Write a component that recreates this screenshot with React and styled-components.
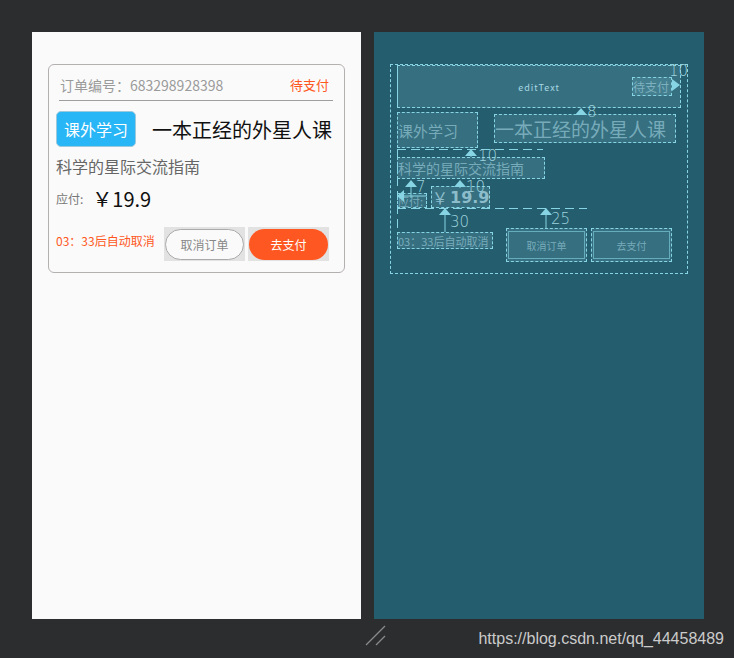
import React from 'react'
import styled, { createGlobalStyle } from 'styled-components'

const GlobalStyle = createGlobalStyle`
  html, body {
    margin: 0;
    padding: 0;
    background: #2c2d2f;
  }
  body {
    font-family: "Noto Sans CJK SC", "Noto Sans", sans-serif;
  }
`

const Page = styled.div`
  position: relative;
  width: 734px;
  height: 658px;
  background: #2c2d2f;
  overflow: hidden;
`

const Panels = styled.div`
  display: flex;
  gap: 13px;
  padding: 32px 0 0 32px;
`

/* ---------- design view ---------- */

const Phone = styled.div`
  width: 329px;
  height: 587px;
  background: #fafafa;
  padding: 32px 0 0 16px;
  box-sizing: border-box;
`

const Card = styled.div`
  width: 297px;
  height: 209px;
  box-sizing: border-box;
  border: 1px solid #b5b0b0;
  border-radius: 6px;
  padding: 0 8px 0 7px;
`

const Header = styled.div`
  display: flex;
  align-items: center;
  justify-content: space-between;
  height: 36px;
  box-sizing: border-box;
  padding: 4px 4px 0 1px;
  margin: 0 3px;
  border-bottom: 1px solid #9e9e9e;
`

const OrderNo = styled.span`
  font-size: 14px;
  color: #9a9a9a;
`

const Status = styled.span`
  font-size: 13px;
  color: #ff5722;
`

const TitleRow = styled.div`
  display: flex;
  align-items: center;
  margin-top: 10px;
`

const Tag = styled.div`
  width: 80px;
  height: 36px;
  display: flex;
  align-items: center;
  justify-content: center;
  background: #29b6f6;
  border: 1px solid #9ec9dc;
  border-radius: 5px;
  box-sizing: border-box;
  color: #fff;
  font-size: 16px;
`

const Title = styled.div`
  margin-left: 16px;
  font-size: 20px;
  color: #111;
`

const Subtitle = styled.div`
  margin-top: 8px;
  height: 22px;
  line-height: 22px;
  font-size: 16px;
  color: #666;
`

const PriceRow = styled.div`
  display: flex;
  align-items: center;
  margin-top: 10px;
  height: 22px;
`

const PriceLabel = styled.span`
  font-size: 12px;
  color: #777;
`

const Price = styled.span`
  margin-left: 9px;
  font-size: 20px;
  color: #111;
`

const ActionRow = styled.div`
  display: flex;
  align-items: center;
  margin-top: 18px;
`

const Countdown = styled.span`
  font-size: 12px;
  color: #ff5722;
  width: 108px;
  margin-top: -8px;
`

const BtnWrap = styled.div`
  width: 81px;
  height: 34px;
  background: #e2e2e2;
  display: flex;
  align-items: center;
  justify-content: center;
  margin-left: ${p => p.$gap || 0}px;
`

const Btn = styled.button`
  width: 79px;
  height: 31px;
  border-radius: 16px;
  box-sizing: border-box;
  font-family: inherit;
  font-size: 12px;
  padding: 0;
  cursor: pointer;
  border: ${p => (p.$primary ? 'none' : '1px solid #aaa')};
  background: ${p => (p.$primary ? '#ff5722' : '#fafafa')};
  color: ${p => (p.$primary ? '#fff' : '#888')};
`

/* ---------- blueprint view ---------- */

const LINE = '#86d4e4'

const Blueprint = styled.div`
  width: 330px;
  height: 587px;
  background: #245d6d;
  padding: 32px 0 0 16px;
  box-sizing: border-box;
`

const BpCard = styled.div`
  position: relative;
  width: 298px;
  height: 210px;
  box-sizing: border-box;
  border: 1px dashed ${LINE};
  padding-left: 6px;
`

const Outline = styled.div`
  box-sizing: border-box;
  border: 1px dashed ${LINE};
  background: rgba(120, 180, 195, 0.22);
  color: rgba(165, 212, 224, 0.6);
  width: ${p => p.$w}px;
  height: ${p => p.$h}px;
  font-size: ${p => p.$fs || 12}px;
  margin-left: ${p => p.$ml || 0}px;
  margin-top: ${p => p.$mt || 0}px;
  display: flex;
  align-items: center;
  white-space: nowrap;
  overflow: hidden;
  flex-shrink: 0;
`

const EditBox = styled(Outline)`
  display: grid;
  grid-template-columns: 1fr auto 1fr;
  align-items: center;
  border-left-style: solid;
`

const EditLabel = styled.span`
  grid-column: 2;
  font-size: 9px;
  letter-spacing: 1px;
  color: #a9d8e3;
  margin-top: 2px;
`

const EditStatus = styled(Outline)`
  grid-column: 3;
  justify-self: end;
  margin-right: 8px;
`

const BpRow = styled.div`
  display: flex;
  align-items: ${p => p.$align || 'flex-start'};
  margin-top: ${p => p.$mt || 0}px;
`

const BtnOutline = styled(Outline)`
  position: relative;
  justify-content: center;
  font-size: 10px;
  &::after {
    content: '';
    position: absolute;
    inset: 2px 1px;
    border: 1px solid rgba(134, 212, 228, 0.6);
  }
`

const Price2 = styled(Outline)`
  color: rgba(170, 215, 228, 0.75);
  align-items: flex-end;
  line-height: 1.1;
  & b {
    font-family: "DejaVu Sans", sans-serif;
    font-weight: 700;
    font-size: 16px;
    margin-left: 2px;
  }
`

/* annotations lie over the diagram */
const Note = styled.div`
  position: absolute;
  left: ${p => p.$x}px;
  top: ${p => p.$y}px;
`

const Num = styled(Note)`
  color: #9dd3df;
  font-size: 15px;
  font-family: "DejaVu Sans", sans-serif;
  font-weight: 200;
  line-height: 1;
`

const HGuide = styled(Note)`
  width: ${p => p.$len}px;
  height: 1px;
  background: repeating-linear-gradient(90deg, ${LINE} 0 9px, transparent 9px 14px);
`

const VGuide = styled(Note)`
  width: 1px;
  height: ${p => p.$len}px;
  background: repeating-linear-gradient(180deg, ${LINE} 0 9px, transparent 9px 14px);
`

const UpArrow = ({ x, y, len }) => (
  <Note $x={x - 6} $y={y}>
    <svg width="12" height={len} style={{ display: 'block' }}>
      <polygon points="6,0 0,7 12,7" fill={LINE} />
      <line x1="6" y1="6" x2="6" y2={len} stroke={LINE} strokeWidth="1" />
    </svg>
  </Note>
)

const SideArrow = ({ x, y, left }) => (
  <Note $x={x} $y={y}>
    <svg width={left ? 30 : 9} height="12" style={{ display: 'block' }}>
      {left ? (
        <>
          <polygon points="0,6 7,0 7,12" fill={LINE} />
          <line x1="6" y1="6" x2="30" y2="6" stroke={LINE} />
        </>
      ) : (
        <polygon points="0,0 8,6 0,12" fill={LINE} />
      )}
    </svg>
  </Note>
)

function BlueprintView() {
  return (
    <Blueprint>
      <BpCard>
        <EditBox $w={284} $h={43}>
          <EditLabel>editText</EditLabel>
          <EditStatus $w={40} $h={19}>待支付</EditStatus>
        </EditBox>

        <BpRow $mt={4}>
          <Outline $w={81} $h={36} $fs={15}>课外学习</Outline>
          <Outline $w={182} $h={29} $fs={19} $ml={16} $mt={2}>一本正经的外星人课</Outline>
        </BpRow>

        <BpRow $mt={9}>
          <Outline $w={148} $h={22} $fs={14}>科学的星际交流指南</Outline>
        </BpRow>

        <BpRow $mt={7} $align="flex-end">
          <Outline $w={30} $h={15} $fs={11}>应付:</Outline>
          <Price2 $w={59} $h={22} $fs={16} $ml={4}>￥<b>19.9</b></Price2>
        </BpRow>

        <BpRow $mt={20}>
          <Outline $w={96} $h={17} $fs={11} $mt={4}>03：33后自动取消</Outline>
          <BtnOutline $w={81} $h={34} $ml={13}>取消订单</BtnOutline>
          <BtnOutline $w={81} $h={34} $ml={4}>去支付</BtnOutline>
        </BpRow>

        <SideArrow x={281} y={14} />
        <Num $x={278} $y={-1}>10</Num>
        <UpArrow x={190} y={43} len={7} />
        <Num $x={196} $y={40}>8</Num>

        <HGuide $x={6} $y={84} $len={146} />
        <VGuide $x={6} $y={84} $len={83} />
        <UpArrow x={80} y={84} len={8} />
        <Num $x={87} $y={84}>10</Num>

        <UpArrow x={20} y={115} len={18} />
        <Num $x={25} $y={115}>7</Num>
        <UpArrow x={69} y={115} len={8} />
        <Num $x={75} $y={115}>10</Num>
        <SideArrow x={6} y={125} left />

        <HGuide $x={6} $y={143} $len={190} />
        <UpArrow x={54} y={143} len={24} />
        <Num $x={59} $y={150}>30</Num>
        <UpArrow x={155} y={143} len={20} />
        <Num $x={160} $y={147}>25</Num>
      </BpCard>
    </Blueprint>
  )
}

const Footer = styled.div`
  position: absolute;
  left: 365px;
  right: 10px;
  bottom: 10px;
  display: flex;
  align-items: flex-end;
  justify-content: space-between;
`

const Watermark = styled.span`
  font-family: "Liberation Sans", Arial, sans-serif;
  font-size: 16px;
  color: #cbcbcb;
`

export default function App() {
  return (
    <Page>
      <GlobalStyle />
      <Panels>
        <Phone>
          <Card>
            <Header>
              <OrderNo>订单编号：683298928398</OrderNo>
              <Status>待支付</Status>
            </Header>
            <TitleRow>
              <Tag>课外学习</Tag>
              <Title>一本正经的外星人课</Title>
            </TitleRow>
            <Subtitle>科学的星际交流指南</Subtitle>
            <PriceRow>
              <PriceLabel>应付:</PriceLabel>
              <Price>￥19.9</Price>
            </PriceRow>
            <ActionRow>
              <Countdown>03：33后自动取消</Countdown>
              <BtnWrap><Btn>取消订单</Btn></BtnWrap>
              <BtnWrap $gap={3}><Btn $primary>去支付</Btn></BtnWrap>
            </ActionRow>
          </Card>
        </Phone>
        <BlueprintView />
      </Panels>
      <Footer>
        <svg width="24" height="24">
          <line x1="1" y1="21" x2="20" y2="2" stroke="#8a8a8a" strokeWidth="1.2" />
          <line x1="11" y1="21" x2="20" y2="12" stroke="#8a8a8a" strokeWidth="1.2" />
        </svg>
        <Watermark>https://blog.csdn.net/qq_44458489</Watermark>
      </Footer>
    </Page>
  )
}
